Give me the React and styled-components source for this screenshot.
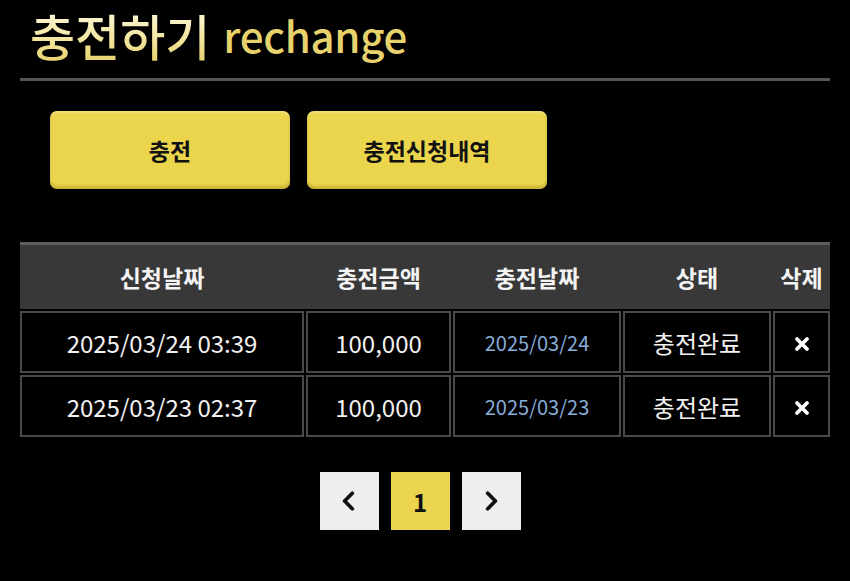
import React from "react";
import styled, { createGlobalStyle } from "styled-components";

const GlobalStyle = createGlobalStyle`
  html, body {
    margin: 0;
    padding: 0;
    background: #000;
  }
  body {
    font-family: "Noto Sans CJK KR", "Noto Sans", sans-serif;
    color: #fff;
  }
`;

const Page = styled.div`
  width: 810px;
  padding: 0 20px 40px;
`;

const Title = styled.h1`
  margin: 0;
  height: 81px;
  padding: 0 0 10px 10px;
  box-sizing: border-box;
  display: flex;
  align-items: center;
  gap: 13px;
  font-weight: 500;
  border-bottom: 3px solid #555;

  .ko {
    font-size: 49px;
    background: linear-gradient(180deg, #fffbe2 10%, #f3e7a0 55%, #e6cf66 95%);
    -webkit-background-clip: text;
    background-clip: text;
    color: transparent;
  }
  .en {
    font-size: 42px;
    color: #e7d26c;
    letter-spacing: -0.3px;
  }
`;

const TabRow = styled.div`
  display: flex;
  gap: 17px;
  padding-left: 30px;
  margin-top: 30px;
`;

const TabButton = styled.button`
  width: 240px;
  height: 78px;
  border: none;
  border-radius: 7px;
  background: #ead54d;
  box-shadow: inset 0 -3px 3px rgba(120, 95, 0, 0.3),
    inset 0 2px 2px rgba(255, 250, 200, 0.35);
  font-family: inherit;
  font-size: 23px;
  font-weight: 700;
  color: #111;
  cursor: pointer;
`;

const cols = "284px 145px 168px 148px 57px";

const Table = styled.div`
  margin-top: 53px;
`;

const HeadRow = styled.div`
  display: grid;
  grid-template-columns: ${cols};
  column-gap: 2px;
  height: 64px;
  background: #383838;
  border-top: 3px solid #5e5e5e;
`;

const HeadCell = styled.div`
  display: flex;
  align-items: center;
  justify-content: center;
  font-size: 23px;
  font-weight: 700;
  color: #f4f4f4;
`;

const BodyRow = styled.div`
  display: grid;
  grid-template-columns: ${cols};
  gap: 2px;
  margin-top: 2px;
`;

const Cell = styled.div`
  height: 58px;
  border: 2px solid #4a4a4a;
  display: flex;
  align-items: center;
  justify-content: center;
  font-size: ${(p) => (p.$small ? "20px" : "24px")};
  color: ${(p) => (p.$link ? "#86aedb" : "#f2f2f2")};
`;

const Pager = styled.div`
  display: flex;
  justify-content: center;
  gap: 12px;
  margin-top: 35px;
  padding-right: 10px;
`;

const PageBtn = styled.button`
  width: 59px;
  height: 58px;
  border: none;
  padding: 0;
  background: ${(p) => (p.$active ? "#ebd54e" : "#efeeef")};
  color: #111;
  font-family: inherit;
  font-size: 24px;
  font-weight: 700;
  display: flex;
  align-items: center;
  justify-content: center;
  cursor: pointer;
`;

const Chevron = ({ dir }) => (
  <svg width="22" height="22" viewBox="0 0 20 20">
    <polyline
      points={dir === "left" ? "13,3 6,10 13,17" : "7,3 14,10 7,17"}
      fill="none"
      stroke="#111"
      strokeWidth="3.4"
      strokeLinecap="round"
      strokeLinejoin="round"
    />
  </svg>
);

const DeleteIcon = () => (
  <svg width="16" height="16" viewBox="0 0 16 16" style={{ marginTop: 4 }}>
    <path
      d="M3 3 L13 13 M13 3 L3 13"
      stroke="#fff"
      strokeWidth="3.8"
      strokeLinecap="round"
    />
  </svg>
);

const history = [
  { req: "2025/03/24 03:39", amount: "100,000", date: "2025/03/24", status: "충전완료" },
  { req: "2025/03/23 02:37", amount: "100,000", date: "2025/03/23", status: "충전완료" },
];

export default function App() {
  return (
    <Page>
      <GlobalStyle />
      <Title>
        <span className="ko">충전하기</span>
        <span className="en">rechange</span>
      </Title>

      <TabRow>
        <TabButton>충전</TabButton>
        <TabButton>충전신청내역</TabButton>
      </TabRow>

      <Table>
        <HeadRow>
          <HeadCell>신청날짜</HeadCell>
          <HeadCell>충전금액</HeadCell>
          <HeadCell>충전날짜</HeadCell>
          <HeadCell>상태</HeadCell>
          <HeadCell>삭제</HeadCell>
        </HeadRow>
        {history.map((row) => (
          <BodyRow key={row.req}>
            <Cell>{row.req}</Cell>
            <Cell>{row.amount}</Cell>
            <Cell $link $small>
              {row.date}
            </Cell>
            <Cell>{row.status}</Cell>
            <Cell>
              <DeleteIcon />
            </Cell>
          </BodyRow>
        ))}
      </Table>

      <Pager>
        <PageBtn>
          <Chevron dir="left" />
        </PageBtn>
        <PageBtn $active>1</PageBtn>
        <PageBtn>
          <Chevron dir="right" />
        </PageBtn>
      </Pager>
    </Page>
  );
}
